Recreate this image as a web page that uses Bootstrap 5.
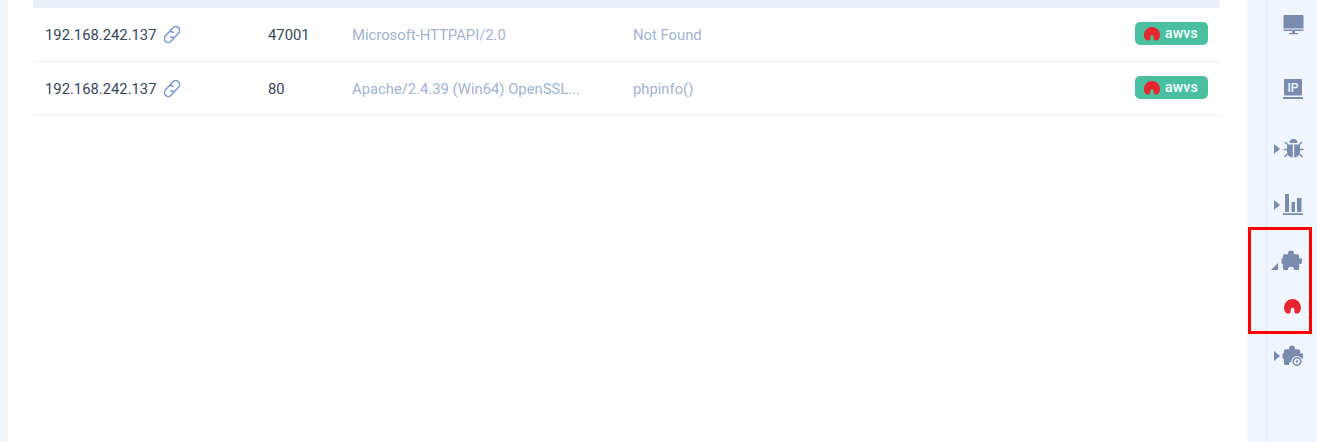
<!DOCTYPE html>
<html lang="en">
<head>
  <meta charset="UTF-8">
  <title>Assets</title>
  <link href="https://cdn.jsdelivr.net/npm/bootstrap@5.3.0/dist/css/bootstrap.min.css" rel="stylesheet">
  <style>
    html, body { height: 100%; }
    body { background: #f1f5fe; font-family: Roboto, "Liberation Sans", sans-serif; font-size: 14.8px; color: #35475f; overflow: hidden; }
    .page-wrap { height: 442px; padding-left: 8px; }
    .main-pane { width: 1239px; padding: 0 26px 0 25px; }
    .head-strip { height: 8px; background: #e9eef7; margin-right: 2px; }
    .asset-table { table-layout: fixed; width: 1188px; margin: 0; border-collapse: separate; border-spacing: 0; }
    .asset-table td { height: 54px; padding: 2px 12px 0; vertical-align: middle; border-bottom: 1px solid #e9edf6; color: #35475f; background: transparent; box-shadow: none; white-space: nowrap; overflow: hidden; }
    .asset-table td.muted-cell { color: #a1b3d5; text-overflow: ellipsis; }
    .asset-table td.tag-cell { padding: 0 12px 2px; }
    .link-ico { width: 16px; height: 17px; margin-left: 7px; vertical-align: -3px; }
    .tag-awvs { width: 73px; height: 23px; background: #4bbfa2; border-radius: 5px; color: #f4fffb; font-size: 14px; font-weight: 500; gap: 5px; padding-left: 9px; margin: 0 1px 0 auto; letter-spacing: .2px; }
    .arch-ico { width: 16px; height: 14px; }
    .side-rail { width: 70px; height: 442px; position: relative; }
    .rail-line { position: absolute; left: 19px; top: 0; bottom: 0; width: 1px; background: #e6ebf7; }
    .rail-item { position: absolute; left: 24px; width: 36px; height: 24px; }
    .rail-arrow { width: 7px; height: 10px; flex: none; margin-left: 2.5px; }
    .rail-icon { width: 22px; height: 22px; flex: none; position: absolute; left: 12px; top: 1px; }
    .rail-icon-wide { left: 9.5px; }
    .rail-icon-gear { left: 11px; }
    .rail-icon-red { left: 13px; width: 17px; height: 15px; }
    .ip-label { font-family: Roboto, "Liberation Sans", sans-serif; font-size: 12px; font-weight: 500; fill: #f1f5fe; }
    .red-box { position: absolute; left: 1px; top: 227px; width: 64px; height: 107px; border: 3px solid #f00; }
  </style>
</head>
<body>
<svg class="d-none">
  <symbol id="arch" viewBox="0 0 16 14"><path fill="#e8262d" fill-rule="evenodd" d="M8 0a8 8 0 0 1 8 8c0 2.200-.8 3.800-2 5-1 .9-3.200.8-4-.2-.5-.7-.2-1.800-.3-2.800-.1-2.400-3.300-2.400-3.400 0-.1 1 .2 2.100-.3 2.800-.8 1-3 1.100-4 .2-1.200-1.200-2-2.800-2-5a8 8 0 0 1 8-8z"/></symbol>
  <symbol id="chain" viewBox="2 2 12 12" preserveAspectRatio="none"><g fill="none" stroke="#6f96d6" stroke-width="1" stroke-linecap="round"><path d="M6.600 5.400 9 3a2.500 2.500 0 0 1 3.600 0l.4.4a2.500 2.500 0 0 1 0 3.600l-2.400 2.400a2.500 2.500 0 0 1-3.600 0"/><path d="M9.400 10.600 7 13a2.500 2.500 0 0 1-3.600 0l-.4-.4a2.500 2.500 0 0 1 0-3.600l2.400-2.400a2.500 2.500 0 0 1 3.600 0"/></g></symbol>
  <symbol id="puzzle" viewBox="0 0 23 23"><path fill="#7a8bb0" d="M7.500 4.500C6.800 1.800 8.500.5 10.500.5s3.700 1.300 3 4H17a2 2 0 0 1 2 2V9c2.500-.8 3-1 3 2.500S21.500 15 19 14v5a2 2 0 0 1-2 2h-3.500c.7-2.500-1-3.500-3-3.500s-3.700 1-3 3.500H4a2 2 0 0 1-2-2v-4.500c-1.500.5-1.500-1-1.500-3s0-3.500 1.500-3V6.500a2 2 0 0 1 2-2z"/></symbol>
</svg>
<div class="page-wrap d-flex">
  <div class="main-pane bg-white">
    <div class="head-strip"></div>
    <table class="table asset-table">
      <colgroup>
        <col style="width: 223px">
        <col style="width: 84px">
        <col style="width: 281px">
        <col style="width: 400px">
        <col>
      </colgroup>
      <tbody>
        <tr>
          <td>192.168.242.137<svg class="link-ico"><use href="#chain"/></svg></td>
          <td>47001</td>
          <td class="muted-cell">Microsoft-HTTPAPI/2.0</td>
          <td class="muted-cell">Not Found</td>
          <td class="tag-cell">
            <div class="tag-awvs d-flex align-items-center">
              <svg class="arch-ico"><use href="#arch"/></svg>
              <span>awvs</span>
            </div>
          </td>
        </tr>
        <tr>
          <td>192.168.242.137<svg class="link-ico"><use href="#chain"/></svg></td>
          <td>80</td>
          <td class="muted-cell">Apache/2.4.39 (Win64) OpenSSL...</td>
          <td class="muted-cell">phpinfo()</td>
          <td class="tag-cell">
            <div class="tag-awvs d-flex align-items-center">
              <svg class="arch-ico"><use href="#arch"/></svg>
              <span>awvs</span>
            </div>
          </td>
        </tr>
      </tbody>
    </table>
  </div>

  <div class="side-rail">
    <div class="rail-line"></div>

    <!-- monitor -->
    <div class="rail-item" style="top: 12px">
      <svg class="rail-icon" viewBox="0 0 22 22"><path fill="#7a8bb0" d="M1.500 2h18a1 1 0 0 1 1 1v14a1 1 0 0 1-1 1h-18a1 1 0 0 1-1-1V3a1 1 0 0 1 1-1zM9 18h3v2h3v1.300H6V20h3z"/><path fill="#f1f5fe" d="M.5 15.500h20v1H.5z"/></svg>
    </div>

    <!-- IP -->
    <div class="rail-item" style="top: 77px">
      <svg class="rail-icon" viewBox="0 0 22 22"><path fill="#7a8bb0" d="M2 1h16a1 1 0 0 1 1 1v14.500a1 1 0 0 1-1 1H2a1 1 0 0 1-1-1V2a1 1 0 0 1 1-1zM0 19h20v2H0z"/><text class="ip-label" x="10" y="13.500" text-anchor="middle">IP</text></svg>
    </div>

    <!-- bug -->
    <div class="rail-item d-flex align-items-center" style="top: 137px">
      <svg class="rail-arrow" viewBox="0 0 7 10"><path fill="#7a8bb0" d="M0 0l6 5-6 5z"/></svg>
      <svg class="rail-icon" viewBox="0 0 22 22"><path fill="#7a8bb0" d="M6.500 5a4 4 0 0 1 8 0zM4 6.500h5.800v13C6.500 19.200 4 17 4 14zM11.200 6.500H17V14c0 3-2.500 5.200-5.800 5.500z"/><path fill="none" stroke="#7a8bb0" stroke-width="1.500" d="M4.500 6.500 2 4M16.500 6.500 19 4M4 11.500H.5M17 11.500h3.500M4.500 16l-3 3M16.500 16l3 3"/></svg>
    </div>

    <!-- chart -->
    <div class="rail-item d-flex align-items-center" style="top: 193px">
      <svg class="rail-arrow" viewBox="0 0 7 10"><path fill="#7a8bb0" d="M0 0l6 5-6 5z"/></svg>
      <svg class="rail-icon" viewBox="0 0 22 22"><path fill="#7a8bb0" d="M2 0h4v18H2zM8.500 8H12v10H8.500zM14 4h4.500v14H14zM0 19.300h20V21H0z"/></svg>
    </div>

    <!-- plugins, open -->
    <div class="rail-item" style="top: 249px">
      <svg class="rail-arrow position-absolute" style="top: 13px; left: -2.5px" viewBox="0 0 7 10"><path fill="#7a8bb0" d="M7 1v7H0z"/></svg>
      <svg class="rail-icon rail-icon-wide"><use href="#puzzle"/></svg>
    </div>

    <!-- awvs plugin -->
    <div class="rail-item" style="top: 298px">
      <svg class="rail-icon rail-icon-red"><use href="#arch"/></svg>
    </div>

    <!-- plugin settings -->
    <div class="rail-item d-flex align-items-center" style="top: 344px">
      <svg class="rail-arrow" viewBox="0 0 7 10"><path fill="#7a8bb0" d="M0 0l6 5-6 5z"/></svg>
      <svg class="rail-icon rail-icon-gear" viewBox="0 0 22 22"><use href="#puzzle"/><circle cx="15" cy="16.500" r="5.500" fill="#f1f5fe"/><circle cx="15" cy="16.500" r="3.800" fill="none" stroke="#7a8bb0" stroke-width="1.600"/><circle cx="15" cy="16.500" r="1.300" fill="#7a8bb0"/></svg>
    </div>

    <div class="red-box"></div>
  </div>
</div>
<script src="https://cdn.jsdelivr.net/npm/bootstrap@5.3.0/dist/js/bootstrap.bundle.min.js"></script>
</body>
</html>
